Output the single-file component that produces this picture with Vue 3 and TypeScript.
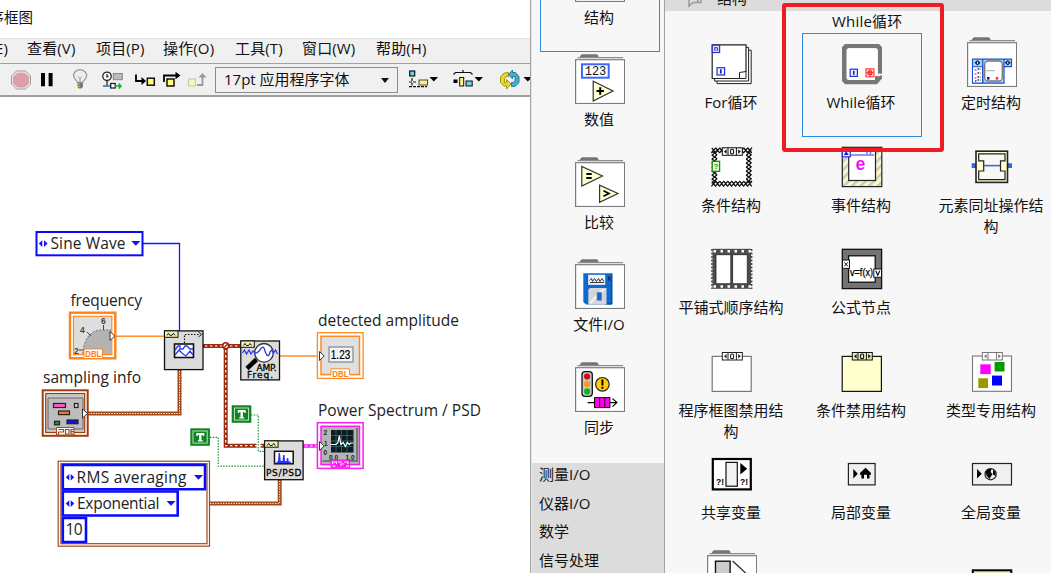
<script setup lang="ts">
interface PaletteItem {
  name: string
  icon: string
  folder?: boolean
  selected?: boolean
}

const menus: string[] = ['编辑(E)', '查看(V)', '项目(P)', '操作(O)', '工具(T)', '窗口(W)', '帮助(H)']
const categories: string[] = ['测量I/O', '仪器I/O', '数学', '信号处理']

const mono = 'font-family="Liberation Mono, monospace"'
const sans = 'font-family="Liberation Sans, sans-serif"'

const folderShape =
  '<path d="M5 3.2V2L7 .3H22L23.5 2V3.2Z" fill="#757575"/><path d="M2.5 3.7H48" stroke="#8c8c8c" stroke-width="1.2"/>' +
  '<rect x=".6" y="5.7" width="49" height="43.8" fill="#fff" stroke="#7d7d7d" stroke-width="1.2"/>'

// Case selector: left arrow, value, right arrow
const selector = (ink: string, fill: string, value = true): string =>
  `<rect x="15.3" y="7.5" width="20" height="7.5" fill="${fill}" stroke="${ink}"/>` +
  `<path d="M21 7.5V15M29.4 7.5V15" stroke="${ink}"/>` +
  `<path d="M19.6 9v4.6L17 11.3ZM31.2 9v4.6L33.8 11.3Z" fill="${ink}"/>` +
  (value ? `<rect x="23.6" y="9" width="3" height="4.6" rx="1.2" fill="none" stroke="${ink}" stroke-width="1.1"/>` : '')

// Braided border of the case structure
const chain = (): string => {
  let s = ''
  for (let i = 0; i < 10; i++) {
    const p = 6.8 + i * 4
    s += `<path d="M${p - 2.4} 46.3l4.6-5.4M${p - 2} 41.3l2 2.4M${p} 44l2 2.4"/><path d="M${p - 2.4} 13l4.6-5.4M${p - 2} 8l2 2.4M${p} 10.7l2 2.4"/>`
  }
  for (let i = 0; i < 8; i++) {
    const p = 13 + i * 4
    s += `<path d="M4.8 ${p + 2.4}l5.4-4.8M5 ${p - 2}l2.4 2M7.8 ${p}l2.4 2M39 ${p + 2.4}l5.4-4.8M39.2 ${p - 2}l2.4 2M42 ${p}l2.4 2"/>`
  }
  return `<g stroke="#111" stroke-width="1.3" fill="none">${s}</g>`
}

const structureIcon = '<path d="M8 20h30v22H8z" fill="none" stroke="#555" stroke-width="3"/>'

const groups: PaletteItem[] = [
  { name: '结构', icon: structureIcon, folder: true, selected: true },
  {
    name: '数值', folder: true,
    icon:
      '<rect x="7" y="10.3" width="26.7" height="13.4" fill="#fff" stroke="#3a69fb" stroke-width="2"/>' +
      `<text x="9.8" y="21" font-size="12" textLength="21.5" ${mono} fill="#111">123</text>` +
      '<path d="M18.2 27.3V47L38 37Z" fill="#ffffcd" stroke="#333" stroke-width="1.2"/><path d="M21.5 37h7.5M25.2 33.3v7.4" stroke="#000" stroke-width="2"/>',
  },
  {
    name: '比较', folder: true,
    icon:
      '<path d="M6.8 9.5V29L27.5 19Z" fill="#ffffcd" stroke="#333" stroke-width="1.2"/><path d="M11.3 17h5.4M11.3 21h5.4" stroke="#000" stroke-width="2.2"/>' +
      '<path d="M24.6 28.2V45.4L43 36.5Z" fill="#ffffcd" stroke="#333" stroke-width="1.2"/><path d="M28.5 33.7l5.5 2.8-5.5 2.8" fill="none" stroke="#000" stroke-width="1.7"/>',
  },
  {
    name: '文件I/O', folder: true,
    icon:
      '<path d="M8.3 14.3H37.3V45.5H11L8.3 43Z" fill="#1169ce"/><path d="M36.8 14.5V45H30" fill="none" stroke="#0a427e"/>' +
      '<rect x="13.2" y="15.8" width="17" height="10" fill="#f5f5f5"/><path d="M14.5 21.5l2-2 1 3 2-3 2 3 2-3 1.5 3 2-3 2 3M15 23.5h14" stroke="#222" fill="none" stroke-width=".9"/>' +
      '<path d="M13.3 45.5V30.5L15 29h16.5v16.5Z" fill="#d1d6dc"/><path d="M14 43L27 30h4L16 45Z" fill="#eee"/><rect x="22" y="33.3" width="4.7" height="8" fill="#1169ce" stroke="#88a" stroke-width=".6"/><rect x="33" y="17.5" width="2.4" height="4" fill="#083462"/>',
  },
  {
    name: '同步', folder: true,
    icon:
      '<rect x="7" y="9.7" width="10.3" height="24.6" rx="3" fill="#c9c9c9" stroke="#111" stroke-width="1.3"/>' +
      '<circle cx="12.1" cy="14.5" r="3.1" fill="#e3001b"/><circle cx="12.1" cy="22" r="3.1" fill="#ff9a10"/><circle cx="12.1" cy="29.4" r="3.1" fill="#0bb52a"/>' +
      '<circle cx="27.4" cy="22.3" r="6.8" fill="#ffcc10" stroke="#222" stroke-width="1.2"/><path d="M27.4 17.5v6M27.4 24.7v2" stroke="#000" stroke-width="2"/>' +
      '<path d="M12.7 40.6H42M37.5 36.6l4.4 4-4.4 4" fill="none" stroke="#000" stroke-width="1.2"/><rect x="19.5" y="35.6" width="15.4" height="10" fill="#f0e" stroke="#111"/><path d="M24.6 36v9M29.8 36v9" stroke="#111"/>',
  },
]

const structures: PaletteItem[] = [
  {
    name: 'For循环',
    icon:
      '<path d="M10 13.2H44.2V46.6H10Z" fill="#fff" stroke="#222"/><path d="M7.6 10.4H41.6V44H7.6Z" fill="#fff" stroke="#222"/><path d="M5.2 7.8H39V34.5L32.5 41.5H5.2Z" fill="#fff" stroke="#222" stroke-width="1.2"/><path d="M32.5 41.5V35.5L39 34.5V41.5Z" fill="#fff" stroke="#222"/>' +
      `<rect x="5.3" y="8.2" width="7.3" height="7.3" fill="#e8e8ff" stroke="#2331e0" stroke-width="1.2"/><text x="6.8" y="14.3" font-size="7.5" font-weight="bold" ${sans} fill="#111cc0">n</text>` +
      `<rect x="10" y="30.7" width="7.6" height="7.3" fill="#f2f2e6" stroke="#2331e0" stroke-width="1.2"/><path d="M13.8 32.3v4.2" stroke="#111cc0" stroke-width="1.6"/>`,
  },
  {
    name: 'While循环', selected: true,
    icon:
      '<path d="M8 7H42L45 10V36.8H40.7V13L38.5 11.3H12L9.7 13V41L12 43H38V38.6H45V41.5L40 47.2H8L5 44V10Z" fill="#777"/>' +
      '<path d="M11 11.3H39.5L40.7 12.5V36.8L38 38.6V43H11L9.7 41.8V12.5Z" fill="#fff"/><path d="M38.2 38.7h4.5v-2.2" fill="none" stroke="#f7f7f7" stroke-width="1"/>' +
      '<rect x="13.2" y="32.2" width="7.2" height="7.2" fill="#eef" stroke="#2331e0" stroke-width="1.2"/><path d="M16.8 33.8v4" stroke="#111cc0" stroke-width="1.6"/>' +
      '<rect x="29" y="31.8" width="8" height="8" fill="#ffeaea" stroke="#f33" stroke-width="1.1"/><path d="M33 32v7.6M29 35.8h8" stroke="#e22" stroke-width="1"/><rect x="31.2" y="34" width="3.6" height="3.6" fill="none" stroke="#e22"/>',
  },
  {
    name: '定时结构', folder: true,
    icon:
      '<path d="M5.5 22.2H44.5V29.7H37V46.2H5.5Z" fill="#a6d4fa" stroke="#1852d0" stroke-width="1.2"/><path d="M5.5 29.7H15.7V46H5.5Z" fill="#fff" stroke="#1852d0"/><path d="M15.7 22V46M37 22V30" stroke="#1852d0" stroke-width="1.2"/>' +
      '<path d="M7.5 33h2M7.5 37h2M7.5 41h2" stroke="#c0c"/><path d="M10.5 32h3M10.5 36h3M10.5 40h3M10.5 43h3M8 44h2" stroke="#334" stroke-width="1.4" stroke-dasharray="1.5 .8"/>' +
      '<rect x="17.7" y="24" width="17.6" height="20" rx="3.5" fill="#fff" stroke="#777" stroke-width="1.3"/><path d="M19 33.7h9" stroke="#aaa"/><rect x="20" y="40" width="2.5" height="2.6" fill="#11b"/><rect x="28.8" y="40" width="2.5" height="2.6" fill="#f33"/>' +
      '<path d="M10.5 23l3 2.7-3 2.7-3-2.7ZM40.8 23l3 2.7-3 2.7-3-2.7Z" fill="#124"/><path d="M10.5 24.6v2.2M40.8 24.6v2.2" stroke="#fff"/>',
  },
  {
    name: '条件结构',
    icon:
      '<rect x="9" y="11" width="31" height="31" fill="#fff"/>' + chain() +
      '<rect x="10.6" y="13.7" width="28" height="26.8" fill="#fff"/><g transform="translate(0 .3)">' + selector('#111', '#fff') + '</g>' +
      `<rect x="5.2" y="21.3" width="7.4" height="10" fill="#efffce" stroke="#178a17" stroke-width="1.3"/><text x="6.6" y="29.3" font-size="8" font-weight="bold" ${sans} fill="#178a17">?</text>`,
  },
  {
    name: '事件结构',
    icon:
      '<defs><pattern id="hatch" width="6" height="6" patternUnits="userSpaceOnUse" patternTransform="rotate(45)"><rect width="6" height="6" fill="#fbf9c4"/><rect width="2.6" height="6" fill="#c9c9c9"/></pattern></defs>' +
      '<rect x="5.3" y="7.3" width="39.5" height="39.3" fill="url(#hatch)" stroke="#222" stroke-width="1.2"/><rect x="11.7" y="9" width="26.8" height="31.5" fill="#fff" stroke="#222" stroke-width="1.2"/>' +
      '<rect x="5.3" y="9" width="8" height="7.8" fill="#eef" stroke="#2331e0" stroke-width="1.2"/><path d="M9.2 11.3l2.5 3.7H6.8Z" fill="#111cc0"/><path d="M14 15h23M17 10v2M35 10l-2 4M30 10v4" stroke="#2331e0"/>' +
      `<text x="18.6" y="30.4" font-size="19" font-weight="bold" textLength="10" lengthAdjust="spacingAndGlyphs" ${mono} fill="#f010f0">e</text>`,
  },
  {
    name: '元素同址操作结构',
    icon:
      '<path d="M4.7 23.2H45V28H4.7Z" fill="#2f6adf"/><rect x="9" y="11.2" width="31.5" height="31.2" fill="#ffffcd" stroke="#222" stroke-width="1.6"/>' +
      '<path d="M11.7 13.8H38V20.8H33.5V31H38V39.6H11.7V31H16.7V20.8H11.7Z" fill="#f7f7f7" stroke="#222" stroke-width="1.2"/><path d="M17 25.6H33.2" stroke="#2f6adf" stroke-width="1.6"/>',
  },
  {
    name: '平铺式顺序结构',
    icon:
      '<rect x="5.5" y="6.8" width="38.5" height="40" fill="#4d4d4d"/><path d="M5 7V47M44.6 7V47" stroke="#4d4d4d" stroke-width="1.6" stroke-dasharray="2 1.5"/><path d="M6.5 9.3H44M6.5 44.5H44" stroke="#fff" stroke-width="2.4" stroke-dasharray="2.5 4.5"/>' +
      '<path d="M9 12.7h14.8v29H9ZM25.6 12.7h14.7v29H25.6Z" fill="#fff" stroke="#222" stroke-width=".8"/>',
  },
  {
    name: '公式节点',
    icon:
      '<rect x="5.3" y="7.3" width="39.3" height="39.3" fill="#747474" stroke="#111" stroke-width="1.3"/><rect x="11.6" y="13.8" width="26.6" height="26.4" fill="#fff" stroke="#111" stroke-width="1.3"/>' +
      '<rect x="5.5" y="18" width="7" height="8.4" fill="#fff" stroke="#111"/><path d="M7.3 20.3l3.6 4M10.9 20.3l-3.6 4" stroke="#111"/><rect x="36.8" y="27" width="7.7" height="8.3" fill="#fff" stroke="#111"/><path d="M38.8 28.8l2 4.5 2-4.5" stroke="#111" fill="none" stroke-width="1.2"/>' +
      `<text x="13" y="33.5" font-size="10" textLength="23" lengthAdjust="spacingAndGlyphs" ${sans} fill="#000" stroke="#000" stroke-width=".25">v=f(x)</text>`,
  },
  { name: '', icon: '' },
  { name: '程序框图禁用结构', icon: '<rect x="5.2" y="11.4" width="39" height="35" fill="#fff" stroke="#777" stroke-width="1.2"/>' + selector('#222', '#fff') },
  { name: '条件禁用结构', icon: '<rect x="5.2" y="11.4" width="39.2" height="35" fill="#ffffcd" stroke="#111" stroke-width="1.2"/>' + selector('#111', '#efedb5') },
  {
    name: '类型专用结构',
    icon:
      '<rect x="5.5" y="11" width="39" height="35.3" fill="#fff" stroke="#777" stroke-width="1.1"/>' + selector('#777', '#fff', false) +
      '<path d="M13.3 19.3h10.4v9.8H13.3Z" fill="#f0f"/><path d="M27.6 17h9.9v9.5h-9.9Z" fill="#009b00"/><path d="M11.3 33.3h9.8v9.8h-9.8Z" fill="#999900"/><path d="M25 30.6h10v9.9H25Z" fill="#00f"/>',
  },
  {
    name: '共享变量',
    icon:
      '<rect x="5.8" y="12" width="38" height="30.4" fill="#fff" stroke="#000" stroke-width="2.2"/><rect x="19" y="15.4" width="11.3" height="23.8" fill="#f3f3f3" stroke="#111" stroke-width="1.2"/><path d="M33.3 16v11.5L40.2 21.8Z"/>' +
      `<text x="9" y="38.3" font-size="9" font-weight="bold" textLength="8" lengthAdjust="spacingAndGlyphs" ${sans}>?!</text><text x="33" y="38.3" font-size="9" font-weight="bold" textLength="8" lengthAdjust="spacingAndGlyphs" ${sans}>?!</text>`,
  },
  {
    name: '局部变量',
    icon: '<rect x="11.4" y="16.5" width="26.7" height="21.4" fill="#f0f0f0" stroke="#222" stroke-width="1.2"/><path d="M16.3 22v9.6L20.8 26.8Z"/><path d="M28.5 20.8L34 26v1.7h-1.5v3.8H30v-3.8h-3v3.8h-2.6v-3.8H23V26Z"/>',
  },
  {
    name: '全局变量',
    icon: '<rect x="5.5" y="16.5" width="39" height="21.4" fill="#f0f0f0" stroke="#222" stroke-width="1.2"/><path d="M10 22v9.6L14.8 26.8Z"/><circle cx="23.6" cy="27.2" r="5.6" fill="#eee" stroke="#222" stroke-width="1.2"/><path d="M18.5 25l3-3 3 0-1 3 2 2-3 5-3-3.5ZM26 23l2.5 2v4l-2.5-1.5Z"/>',
  },
  { name: '', folder: true, icon: '<rect x="8.5" y="11.2" width="14.6" height="32" fill="#ccc" stroke="#111" stroke-width="1.4"/><path d="M25.7 11L45 29" stroke="#222" stroke-width="1.2"/>' },
  { name: '', icon: '' },
  { name: '', icon: '<rect x="5.8" y="20.3" width="38.5" height="26" fill="#efedb5" stroke="#000" stroke-width="2"/>' },
]

const draw = (item: PaletteItem): string => (item.folder ? folderShape : '') + item.icon
</script>

<template>
  <div class="screen">
    <section class="editor">
      <header class="title"><span>程序框图</span></header>
      <nav class="menu">
        <span v-for="m in menus" :key="m">{{ m }}</span>
      </nav>
      <div class="toolbar">
        <svg class="tools" width="215" height="30" viewBox="0 65 215 30">
          <path d="M16.5 71h9l5 5v8l-5 5h-9l-5-5v-8Z" fill="#ececec" stroke="#999" />
          <path d="M17.3 73.2h7.4l3.8 3.6v6.6l-3.8 3.6h-7.4l-3.8-3.6v-6.6Z" fill="#dea0a6" stroke="#c99095" stroke-width=".7" />
          <path d="M41 73h4v13.3h-4ZM48.6 73h4v13.3h-4Z" />
          <path d="M77.5 82.5c-.3-2-4-3.5-4-7a6.6 5.8 0 0 1 13.2 0c0 3.500-3.700 5-4 7Z" fill="#eeeeee" stroke="#999" stroke-width="1.3" />
          <path d="M78 76.5l2 2 2-2M80 78v4" fill="none" stroke="#999" />
          <path d="M77.500 82.700h5.400v4.300l-1.500 1.600h-2.500l-1.400-1.600Z" fill="#777" />
          <path d="M78 84h2M78 86.500h2" stroke="#d3ba40" />
          <circle cx="107" cy="76.300" r="4.200" fill="#fff" stroke="#222" stroke-width="1.300" />
          <path d="M107 74v3l1.500-1M107 80.500v5" fill="none" stroke="#222" stroke-width="1.200" />
          <rect x="113.300" y="73.500" width="9" height="6.200" fill="#bbb" stroke="#888" />
          <path d="M103 86h8" stroke="#2363ef" stroke-width="1.500" />
          <rect x="110.700" y="83.500" width="4.500" height="4.500" fill="#fff" stroke="#222" stroke-width="1.300" />
          <path d="M115 86h4v-2.500l2.600 2.500-2.600 2.700V86Z" fill="#12b422" stroke="#12b422" />
          <path d="M136 74.500v6.500h6.500" fill="none" stroke="#000" stroke-width="1.800" />
          <path d="M141.500 77v8l4.500-4Z" />
          <rect x="147.300" y="78.200" width="7" height="7" fill="#ffff78" stroke="#111" stroke-width="1.500" />
          <path d="M164 82v-6.500h12.500" fill="none" stroke="#000" stroke-width="1.800" />
          <path d="M175.500 71.800v7.400l5-3.700Z" />
          <rect x="167" y="79" width="7" height="7" fill="#ffff78" stroke="#111" stroke-width="1.500" />
          <rect x="188.500" y="79" width="7" height="7" fill="#f6f5bc" stroke="#c6c5a2" />
          <path d="M197 85h5.500v-9" fill="none" stroke="#999" stroke-width="1.800" />
          <path d="M198.500 77.500h8l-4-4.500Z" fill="#999" />
        </svg>
        <div class="font-box">
          <span class="font-name">17pt 应用程序字体</span>
          <i class="caret"></i>
        </div>
        <svg class="tools" width="132" height="30" viewBox="398 65 132 30">
          <rect x="409.700" y="71" width="5" height="5" fill="#63d4ef" stroke="#111" stroke-width="1.200" />
          <path d="M412 78v3M409 82h7M412 83v2.500M409 86.700h18" stroke="#111" stroke-width="1.200" stroke-dasharray="3 1" />
          <rect x="419" y="80" width="8.500" height="5" fill="#fcf58a" stroke="#444" />
          <path d="M429.500 77h8.500l-4.200 4.500ZM474.500 77h8.500l-4.200 4.500ZM523.500 77h8.500l-4.200 4.500Z" />
          <path d="M453.500 74.500l2-2h15l2 2M463 72v-2" fill="none" stroke="#111" stroke-width="1.200" />
          <path d="M453.500 79.500h4v3.500h-4Z" />
          <rect x="459.700" y="77.500" width="4" height="8.500" fill="#fcf58a" stroke="#111" />
          <rect x="466" y="81" width="6.200" height="5" fill="#63d4ef" stroke="#111" />
          <path d="M508.500 72.500l-4.500.5-3.500 4v5.500l3.500 3.500h2.500v3l4.500-5-4.500-4.500v3h-2v-4l1.500-2h2.500Z" fill="#e7dc19" stroke="#8d8414" stroke-width=".8" />
          <path d="M512.500 70l-4 4.500 4 4.500v-2.500h2.500v4l-2 2h-1.500v4h3.500l4-4v-6l-3.500-4h-3Z" fill="#43afd0" stroke="#176684" stroke-width=".8" />
        </svg>
      </div>
      <svg class="diagram" width="530" height="476" viewBox="0 97 530 476">
        <!-- wires -->
        <g fill="none">
          <path d="M143 243.500H179.500V331" stroke="#1a1aff" stroke-width="1.300" />
          <path d="M115 336.300H164M280 356H318" stroke="#ff8f2b" stroke-width="1.500" />
          <g stroke="#a04a1c" stroke-width="4"><path d="M88 413.500H179.500V370M210 503.400H279.700V480" /></g>
          <g stroke="#fff" stroke-width="1" stroke-dasharray="1.300 1.300"><path d="M88 413.500H179.500V370M210 503.400H279.700V480" /></g>
          <g stroke="#9c2b10" stroke-width="4"><path d="M203 346H241M225.700 346V445.700H264" /></g>
          <g stroke="#fff" stroke-width="1.200" stroke-dasharray="2.400 2.600"><path d="M205 346H241M225.700 350V445.700H264" /></g>
          <circle cx="225.700" cy="345.800" r="3" fill="#fff" stroke="#a02010" stroke-width="1.500" />
          <path d="M223.700 348l4-4" stroke="#a02010" stroke-width="1.200" />
          <path d="M256.500 442.500h4v6h-4Z" fill="#fff" />
          <path d="M251 415H258.300V451.300H264M210 437.300H218.300V466.200H264" stroke="#1f9432" stroke-width="1.200" stroke-dasharray="1.500 1.300" />
          <path d="M303 446H318" stroke="#f91df0" stroke-width="3.600" />
          <path d="M305 446H318" stroke="#fff" stroke-width="1.200" stroke-dasharray="2.500 2.500" />
        </g>

        <!-- enumerated constant -->
        <rect x="36.500" y="232" width="106" height="23.300" fill="#fff" stroke="#0a0aff" stroke-width="2" />
        <path d="M42.300 240.300v6.600l-3.500-3.300ZM44 240.300v6.600l3.600-3.300ZM131.300 241h9l-4.500 4.700Z" fill="#1414f0" />

        <!-- frequency control -->
        <rect x="70" y="312.700" width="45.300" height="45.600" fill="#fff" stroke="#ff8216" stroke-width="2.400" />
        <rect x="73.500" y="316.300" width="38.300" height="38.300" fill="#dedede" stroke="#ff8a24" stroke-width="1.200" />
        <path d="M83 354c0-14 8-24 18-24h10v24Z" fill="#b3b3b3" />
        <path d="M83 354c0-14 8-24 18-24h10" fill="none" stroke="#888" stroke-width="1.300" stroke-dasharray="2 1.500" />
        <path d="M87 332l4 4M103.500 325v5M79 350h5" stroke="#444" />
        <g class="dial" fill="#444">
          <text x="101" y="324">6</text><text x="80" y="332.500">4</text><text x="74" y="354">2</text>
        </g>
        <path d="M110 331.500v9l4.800-4.500Z" fill="#fff" stroke="#333" />
        <rect x="84" y="349" width="18.500" height="9.500" fill="#fff" stroke="#ff8a24" />
        <text class="tag" x="85.300" y="357" textLength="16" lengthAdjust="spacingAndGlyphs" fill="#ff7c10">DBL</text>

        <!-- sampling info cluster -->
        <rect x="42.700" y="390.300" width="45" height="45.500" fill="#fff" stroke="#9c3f10" stroke-width="2" />
        <rect x="45.700" y="393.500" width="39" height="39" fill="#cacaca" stroke="#9c3f10" stroke-width="1.200" />
        <path d="M48 398h35v31H48Z" fill="#bdbdbd" stroke="#666" />
        <g stroke="#222" stroke-width="1.200">
          <rect x="53.500" y="403.500" width="12" height="4" fill="#ff5fca" /><rect x="74.500" y="403.500" width="3.500" height="4" fill="#ddd" />
          <rect x="58.500" y="411" width="11" height="3.600" fill="#ff7030" /><rect x="54.500" y="421.300" width="5" height="3.500" fill="#169a1b" />
          <rect x="67" y="420" width="11" height="3.700" fill="#1414dc" />
        </g>
        <path d="M82.500 409v9l5-4.500Z" fill="#fff" stroke="#333" />
        <path d="M56.500 427.500h17.500v7.500H56.500Z" fill="#fff" stroke="#a04a1c" />
        <path d="M58.500 429.500h5v2.500h-5v3M65.500 429.500h3.500v4.500h-3.500ZM74 429.500h-3v4.500h3M71 431.700h3" fill="none" stroke="#a04a1c" stroke-width="1.200" />

        <!-- waveform generator -->
        <rect x="164.500" y="330.900" width="38.500" height="38.700" fill="#dcdcdc" stroke="#111" stroke-width="1.300" />
        <rect x="164.500" y="330.900" width="13.500" height="6.400" fill="#f1efb8" stroke="#111" />
        <path d="M167 335.300l1.500-2 1.500 2h2l1.500-2 1.500 2" fill="none" stroke="#111" />
        <path d="M184.500 343v-8.500H200" fill="none" stroke="#111" stroke-width="1.200" stroke-dasharray="1.500 1.500" />
        <path d="M198.500 332l3 2.500-3 2.500" fill="none" stroke="#111" />
        <rect x="174.500" y="344" width="19" height="13.500" fill="#fff" stroke="#111" stroke-width="1.600" />
        <path d="M175 350l3-4h2v3h3l2-3h2l3 3h3M175 355l4-5 4 4 3 2 4-5 3 4" fill="none" stroke="#2a35f5" stroke-width="1.300" />

        <!-- amplitude and frequency analyser -->
        <rect x="240.800" y="341" width="38.700" height="38.900" fill="#dcdcdc" stroke="#111" stroke-width="1.300" />
        <rect x="240.800" y="341" width="13.500" height="6.300" fill="#f1efb8" stroke="#111" />
        <path d="M243.500 345.500l1.500-2 1.500 2h2l1.500-2 1.500 2" fill="none" stroke="#111" />
        <path d="M256.500 359.500l-9.500 9" stroke="#000" stroke-width="4.500" />
        <circle cx="264" cy="352.800" r="9.300" fill="#fff" stroke="#333" stroke-width="1.300" />
        <path d="M242.500 353l2-3 2 4 2.500-4 2 4 2-3 2 2c2 1 3-1 5-3 2-4 4-4 5 1 2 6 4 6 5 1l1.500-2 2 3 2-3 2 4" fill="none" stroke="#2a35f5" stroke-width="1.300" />
        <text class="chip" x="256.500" y="370.800" textLength="20">AMP.</text>
        <text class="chip" x="247" y="378" textLength="26">Freq.</text>

        <!-- power spectrum analyser -->
        <rect x="264.600" y="440.900" width="38.500" height="38.800" fill="#dcdcdc" stroke="#111" stroke-width="1.300" />
        <rect x="264.600" y="440.900" width="13.500" height="6.300" fill="#f1efb8" stroke="#111" />
        <path d="M267.200 445.500l1.500-2 1.500 2h2l1.500-2 1.500 2" fill="none" stroke="#111" />
        <rect x="274.500" y="451.300" width="18.700" height="12.500" fill="#fff" stroke="#111" stroke-width="1.500" />
        <path d="M276.500 463v-1.500h1.500l.6-8.500h1.400l.8 8h1.700l.6-6h1.400l.6 6h1.400l.5-3h1.200l.5 3.500h2v1.500Z" fill="#2a35f5" />
        <text class="chip" x="266" y="475.700" textLength="35.500">PS/PSD</text>

        <!-- detected amplitude indicator -->
        <rect x="317.400" y="332.700" width="45.700" height="45.700" fill="#fff" stroke="#ff8a24" stroke-width="1.300" />
        <rect x="321" y="336.300" width="38.500" height="38.300" fill="#e0e0e0" stroke="#ff8a24" stroke-width="1.500" />
        <rect x="329" y="347" width="24" height="15" fill="#f4f4f4" stroke="#999" stroke-width="1.500" />
        <text x="330.800" y="359.300" class="readout" textLength="19.500" lengthAdjust="spacingAndGlyphs">1.23</text>
        <path d="M319.500 351.500v9l4.700-4.500Z" fill="#fff" stroke="#333" />
        <path d="M331 378V368.800h18.500V378Z" fill="#fff" /><path d="M331 374.500v-5.700h18.500v5.700" fill="none" stroke="#ff8a24" />
        <text class="tag" x="332.300" y="377" textLength="16.300" lengthAdjust="spacingAndGlyphs" fill="#ff7c10">DBL</text>

        <!-- spectrum graph indicator -->
        <rect x="317.400" y="422.700" width="45.700" height="45.700" fill="#fff" stroke="#f91df0" stroke-width="1.500" />
        <rect x="321" y="426.300" width="38.500" height="38.300" fill="#b4b4b4" stroke="#f91df0" stroke-width="1.500" />
        <path d="M357 428V461H322.500" fill="none" stroke="#666" stroke-width="1.500" />
        <rect x="331" y="430" width="22.500" height="22.500" fill="#0c1c1f" />
        <path d="M336 430v22M341.500 430v22M347 430v22M331 435.500h22M331 441h22M331 446.500h22" stroke="#2f7177" stroke-width=".8" />
        <path d="M331 444.500h5l2-2 1.300-7 1.500 9 2.500-2 2 4 2-4 2 2 1.500-1.500h2.500" fill="none" stroke="#fff" stroke-width="1.200" />
        <g class="tiny" fill="#222">
          <text x="323.500" y="435">2</text><text x="324" y="446">1</text><text x="323.500" y="454.500">0</text><text x="329" y="459.500">0.0</text><text x="345.500" y="459.500">1.0</text>
        </g>
        <path d="M319.500 441.500v9l4.700-4.500Z" fill="#fff" stroke="#333" />
        <path d="M330.500 459.500h19.500v8.300h-19.500Z" fill="#f91df0" /><path d="M332.500 464v-2h4v2M338 462h4M344 462h4v2M332.500 466h3M341 466v-2h3M346 466h3" stroke="#fff" fill="none" stroke-width="1.100" />

        <!-- boolean constants -->
        <g v-for="b in [{ x: 231.7, y: 405.3 }, { x: 190.3, y: 428.3 }]" :key="b.x" :transform="`translate(${b.x} ${b.y})`">
          <rect width="19.600" height="17.500" fill="#0f8420" />
          <rect x="2.700" y="2.700" width="14.200" height="12.100" fill="none" stroke="#cfeecf" stroke-width=".9" />
          <path d="M6 4.700h8v3h-1.500v-1h-1.300v5.300h1.300v1.300H7.500V12h1.300V6.700H7.500v1H6Z" fill="#fff" />
        </g>

        <!-- averaging parameters cluster -->
        <rect x="58.200" y="461.200" width="151.300" height="85" fill="#fff" stroke="#a04a1c" stroke-width="1.200" />
        <rect x="60.900" y="463.700" width="146.100" height="80" fill="#fff" stroke="#a04a1c" stroke-width="1.200" />
        <g fill="#fff" stroke="#0a0aff" stroke-width="2.600">
          <path d="M62.800 465H205v24.300H62.800Z" /><path d="M62.800 491.500H177.700v24H62.800Z" /><path d="M62.800 518H86v24H62.800Z" />
        </g>
        <path d="M69.300 474v6.600l-3.500-3.300ZM70.700 474v6.600l3.600-3.300ZM194 475h9l-4.500 4.700ZM69.300 500.300v6.600l-3.500-3.300ZM70.700 500.300v6.600l3.600-3.300ZM166.500 501h9l-4.500 4.700Z" fill="#1414f0" />

        <g class="label">
          <text x="50.500" y="249.400" textLength="75">Sine Wave</text>
          <text x="70.500" y="306" textLength="71.500">frequency</text>
          <text x="43" y="383.300" textLength="98">sampling info</text>
          <text x="318" y="325.600" textLength="141">detected amplitude</text>
          <text x="318" y="415.600" textLength="163">Power Spectrum / PSD</text>
          <text x="76.500" y="483.400" textLength="110">RMS averaging</text>
          <text x="77" y="509.400" textLength="82.500">Exponential</text>
          <text x="65.500" y="535.400" textLength="17">10</text>
        </g>
      </svg>
    </section>

    <aside class="groups">
      <div class="group-list">
        <div v-for="g in groups" :key="g.name" class="cell" :class="{ selected: g.selected }">
          <svg width="50" height="50" viewBox="0 0 50 50" v-html="draw(g)"></svg>
          <span>{{ g.name }}</span>
        </div>
      </div>
      <ul class="categories">
        <li v-for="c in categories" :key="c">{{ c }}</li>
      </ul>
    </aside>

    <main class="structures">
      <header class="crumb">
        <svg width="16" height="14" viewBox="0 0 16 14"><path d="M2 0V12L6 8.500h8V0M9 0l2 8" fill="none" stroke="#999" stroke-width="1.500" /></svg>
        <span>结构</span>
      </header>
      <div class="grid">
        <div v-for="(s, i) in structures" :key="i" class="cell" :class="{ selected: s.selected }">
          <svg width="50" height="50" viewBox="0 0 50 50" v-html="draw(s)"></svg>
          <span>{{ s.name }}</span>
        </div>
      </div>
      <div class="tooltip">While循环</div>
      <div class="highlight"></div>
    </main>
  </div>
</template>

<style>
html,
body {
  margin: 0;
  overflow: hidden;
}
</style>

<style scoped>
.screen {
  width: 1051px;
  height: 573px;
  overflow: hidden;
  display: flex;
  background: #fff;
  color: #111;
  font: 15px/21px 'Open Sans', 'Noto Sans CJK SC', sans-serif;
}
.screen * {
  box-sizing: border-box;
}
.editor {
  width: 531px;
  flex: none;
  overflow: hidden;
  border-right: 1px solid #a3a3a3;
}
.title {
  height: 38px;
  padding-top: 7px;
  display: flex;
  font-size: 14.5px;
}
.title span {
  margin-left: -25px;
  white-space: nowrap;
}
.menu {
  height: 25px;
  background: #f0f0f0;
  border-top: 1px solid #e3e3e3;
  display: grid;
  grid-template-columns: 27px 69px 67px 72px 67px 74px 80px;
  line-height: 18px;
  white-space: nowrap;
}
.menu span {
  letter-spacing: 0.15px;
}
.menu span:first-child {
  justify-self: end;
  margin-right: 19px;
}
.toolbar {
  height: 34px;
  background: #f0f0f0;
  border-top: 1px solid #a0a0a0;
  border-bottom: 2px solid #a0a0a0;
  display: flex;
  align-items: flex-start;
  padding-top: 1px;
}
.tools {
  display: block;
  flex: none;
}
.font-box {
  width: 183px;
  height: 26px;
  margin-top: 2px;
  border: 1px solid #8c8c8c;
  display: flex;
  align-items: center;
  justify-content: space-between;
  padding: 0 8px;
  flex: none;
}
.font-name {
  margin-top: -1px;
}
.caret {
  border: 4.5px solid transparent;
  border-top: 5px solid #111;
  border-bottom: 0;
}
.diagram {
  display: block;
}
.label {
  font-family: 'Open Sans', sans-serif;
  font-size: 15.5px;
  fill: #222;
}
.tiny {
  font: bold 6.5px 'Liberation Sans', sans-serif;
}
.dial {
  font: bold 8.5px 'Liberation Sans', sans-serif;
}
.tag {
  font: bold 8.5px 'Liberation Sans', sans-serif;
}
.chip {
  font-family: 'DejaVu Sans', sans-serif;
  font-size: 9px;
  fill: #000;
  stroke: #000;
  stroke-width: 0.3px;
}
.readout {
  font-family: 'Liberation Sans', sans-serif;
  font-size: 12px;
  fill: #000;
  stroke: #000;
  stroke-width: 0.2px;
}
.groups {
  width: 134px;
  flex: none;
  background: #f7f7f7;
  border-left: 1px solid #e6e6e6;
  border-right: 1px solid #a3a3a3;
  display: flex;
  flex-direction: column;
}
.group-list {
  height: 463px;
  flex: none;
  overflow: hidden;
  padding: 0 0 2px 4px;
  display: grid;
  grid-template-rows: 102px 103px 102px 103px 103px;
  justify-content: center;
  align-content: end;
}
.cell {
  width: 120px;
  height: 104px;
  border: 1px solid transparent;
  padding: 3px 5px 0;
  display: flex;
  flex-direction: column;
  align-items: center;
  text-align: center;
}
.cell svg {
  flex: none;
  display: block;
}
.cell span {
  margin: 5px 2px 0 0;
  width: 108px;
}
.selected {
  border-color: #2f8be0;
}
.categories {
  flex: 1;
  margin: 0;
  padding: 0 0 0 7px;
  list-style: none;
  background: #dcdcdc;
  overflow: hidden;
}
.categories li {
  height: 28.7px;
  line-height: 22px;
}
.structures {
  flex: 1;
  position: relative;
  background: #f7f7f7;
  overflow: hidden;
}
.crumb {
  height: 11px;
  background: #dcdcdc;
  display: flex;
  padding-left: 22px;
  overflow: hidden;
}
.crumb svg {
  flex: none;
  margin-top: -6px;
}
.crumb span {
  margin: -12px 0 0 14px;
}
.grid {
  margin: 22px 0 0 7px;
  display: grid;
  grid-template-columns: repeat(3, 120px);
  column-gap: 10px;
  grid-template-rows: 103px 102px 103px 102px 103px 103px;
}
.tooltip {
  position: absolute;
  left: 167px;
  top: 11px;
  letter-spacing: 0.2px;
}
.highlight {
  position: absolute;
  left: 117px;
  top: 3px;
  width: 162px;
  height: 149px;
  border: 4.5px solid #ee1c25;
  border-radius: 3px;
}
</style>
